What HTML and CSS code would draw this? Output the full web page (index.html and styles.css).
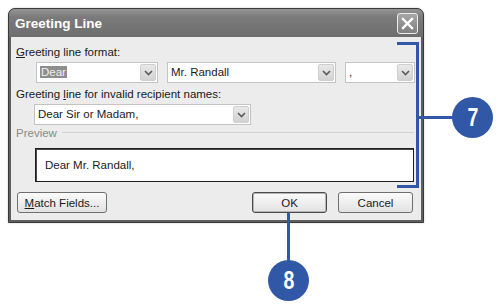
FILE: index.html
```html
<!DOCTYPE html>
<html lang="en">
<head>
    <meta charset="utf-8" />
    <title>Greeting Line</title>
    <link rel="stylesheet" href="styles.css">
</head>
<body>
    <div class="stage">
        <div class="dialog">
            <div class="titlebar">
                <span class="title">Greeting Line</span>
                <button class="close-btn" aria-label="Close">
                    <svg width="13" height="13" viewBox="0 0 13 13">
                        <path d="M2 2 L11 11 M11 2 L2 11" stroke="#fff" stroke-width="2.4" stroke-linecap="square" fill="none"/>
                    </svg>
                </button>
            </div>

            <div class="panel">
                <div class="label"><u>G</u>reeting line format:</div>
                <div class="format-row">
                    <div class="combo">
                        <span class="value"><span class="selected">Dear</span></span>
                        <span class="arrow"><svg width="9" height="6" viewBox="0 0 9 6"><path d="M1 1 L4.5 4.5 L8 1" stroke="#5a5a5a" stroke-width="1.6" fill="none"/></svg></span>
                    </div>
                    <div class="combo">
                        <span class="value">Mr. Randall</span>
                        <span class="arrow"><svg width="9" height="6" viewBox="0 0 9 6"><path d="M1 1 L4.5 4.5 L8 1" stroke="#5a5a5a" stroke-width="1.6" fill="none"/></svg></span>
                    </div>
                    <div class="combo">
                        <span class="value">,</span>
                        <span class="arrow"><svg width="9" height="6" viewBox="0 0 9 6"><path d="M1 1 L4.5 4.5 L8 1" stroke="#5a5a5a" stroke-width="1.6" fill="none"/></svg></span>
                    </div>
                </div>

                <div class="label second">Greeting <u>l</u>ine for invalid recipient names:</div>
                <div class="combo invalid-combo">
                    <span class="value">Dear Sir or Madam,</span>
                    <span class="arrow"><svg width="9" height="6" viewBox="0 0 9 6"><path d="M1 1 L4.5 4.5 L8 1" stroke="#5a5a5a" stroke-width="1.6" fill="none"/></svg></span>
                </div>

                <div class="preview-label"><span>Preview</span></div>
                <div class="preview-box">Dear Mr. Randall,</div>

                <div class="button-row">
                    <button class="btn match-btn"><u>M</u>atch Fields...</button>
                    <button class="btn ok-btn">OK</button>
                    <button class="btn">Cancel</button>
                </div>
            </div>
        </div>

        <!-- callouts -->
        <div class="bracket"></div>
        <div class="leader leader-7"></div>
        <div class="callout callout-7"><span>7</span></div>
        <div class="leader leader-8"></div>
        <div class="callout callout-8"><span>8</span></div>
    </div>
</body>
</html>
```

FILE: styles.css
```css
* {
    margin: 0;
    padding: 0;
    box-sizing: border-box;
}

body {
    font-family: "Liberation Sans", Arial, sans-serif;
    font-size: 11.5px;
    color: #1a1a1a;
    background: #ffffff;
}

.stage {
    position: relative;
    width: 500px;
    height: 308px;
    padding: 8px 0 0 8px;
}

.dialog {
    width: 416px;
    background: #5e5e5e;
    border: 1px solid #3a3a3a;
    border-radius: 7px 7px 0 0;
    box-shadow: 0 0 2px rgba(0, 0, 0, 0.25);
}

.titlebar {
    height: 28px;
    display: flex;
    align-items: center;
    justify-content: space-between;
    padding: 1px 5px 0 6px;
    background: linear-gradient(to bottom, #959595 0%, #7a7a7a 30%, #6e6e6e 100%);
    border-radius: 6px 6px 0 0;
}

.title {
    color: #ffffff;
    font-weight: bold;
    font-size: 13.5px;
}

.close-btn {
    width: 21px;
    height: 21px;
    display: flex;
    align-items: center;
    justify-content: center;
    background: linear-gradient(to bottom, #a6a6a6, #808080);
    border: 1px solid #ececec;
    border-radius: 3px;
}

.panel {
    margin: 0 2px 2px;
    background: #ececec;
    padding: 8px 6px 7px 5px;
}

.label {
    height: 15px;
    line-height: 15px;
    margin-bottom: 2px;
}

.label.second {
    margin-top: 4px;
}

.format-row {
    display: grid;
    grid-template-columns: 122px 169px 70px;
    column-gap: 9px;
    margin-left: 20px;
}

.combo {
    height: 21px;
    display: flex;
    align-items: center;
    justify-content: space-between;
    background: #ffffff;
    border: 1px solid #c4c4c4;
    padding: 0 1px 0 3px;
}

.combo .value {
    line-height: 15px;
}

.selected {
    background: #8e8e8e;
    color: #eeeeee;
    padding: 0 1px;
}

.arrow {
    width: 16px;
    height: 17px;
    display: flex;
    align-items: center;
    justify-content: center;
    background: linear-gradient(to bottom, #e9e9e9, #d2d2d2);
    border: 1px solid #cfcfcf;
    border-radius: 2px;
}

.invalid-combo {
    width: 217px;
    margin-left: 18px;
}

.preview-label {
    display: flex;
    align-items: center;
    gap: 5px;
    height: 15px;
    color: #8a8a8a;
}

.preview-label::after {
    content: "";
    flex: 1;
    border-top: 1px solid #d2d2d2;
    margin-right: 1px;
}

.preview-box {
    height: 34px;
    margin: 8px 1px 0 19px;
    background: #ffffff;
    border: 1px solid #1e1e1e;
    box-shadow: inset 1px 1px 0 #4a4a4a;
    padding-left: 9px;
    display: flex;
    align-items: center;
}

.button-row {
    display: flex;
    gap: 11px;
    margin-top: 10px;
    padding-right: 2px;
}

.btn {
    height: 21px;
    width: 75px;
    font-family: inherit;
    font-size: 11.5px;
    color: #1a1a1a;
    background: linear-gradient(to bottom, #fbfbfb, #e2e2e2);
    border: 1px solid #6f6f6f;
    border-radius: 3px;
}

.match-btn {
    width: 90px;
    margin-left: 1px;
    margin-right: auto;
}

.ok-btn {
    border-color: #4a4a4a;
    box-shadow: inset 0 0 0 1px #b5b5b5;
}

/* callout annotations */
.bracket {
    position: absolute;
    left: 397px;
    top: 42px;
    width: 22px;
    height: 146px;
    border: 3px solid #3158a6;
    border-left: none;
}

.leader {
    position: absolute;
    background: #3158a6;
}

.leader-7 {
    left: 419px;
    top: 116px;
    width: 36px;
    height: 3px;
}

.leader-8 {
    left: 287px;
    top: 213px;
    width: 3px;
    height: 49px;
}

.callout {
    position: absolute;
    width: 41px;
    height: 41px;
    border-radius: 50%;
    background: #3158a6;
    color: #ffffff;
    font-family: "Liberation Sans", Arial, sans-serif;
    font-weight: bold;
    font-size: 25px;
    display: flex;
    align-items: center;
    justify-content: center;
}

.callout span {
    display: inline-block;
    transform: scaleX(0.78);
}

.callout-7 {
    left: 452px;
    top: 97px;
}

.callout-8 {
    left: 268px;
    top: 260px;
}
```
